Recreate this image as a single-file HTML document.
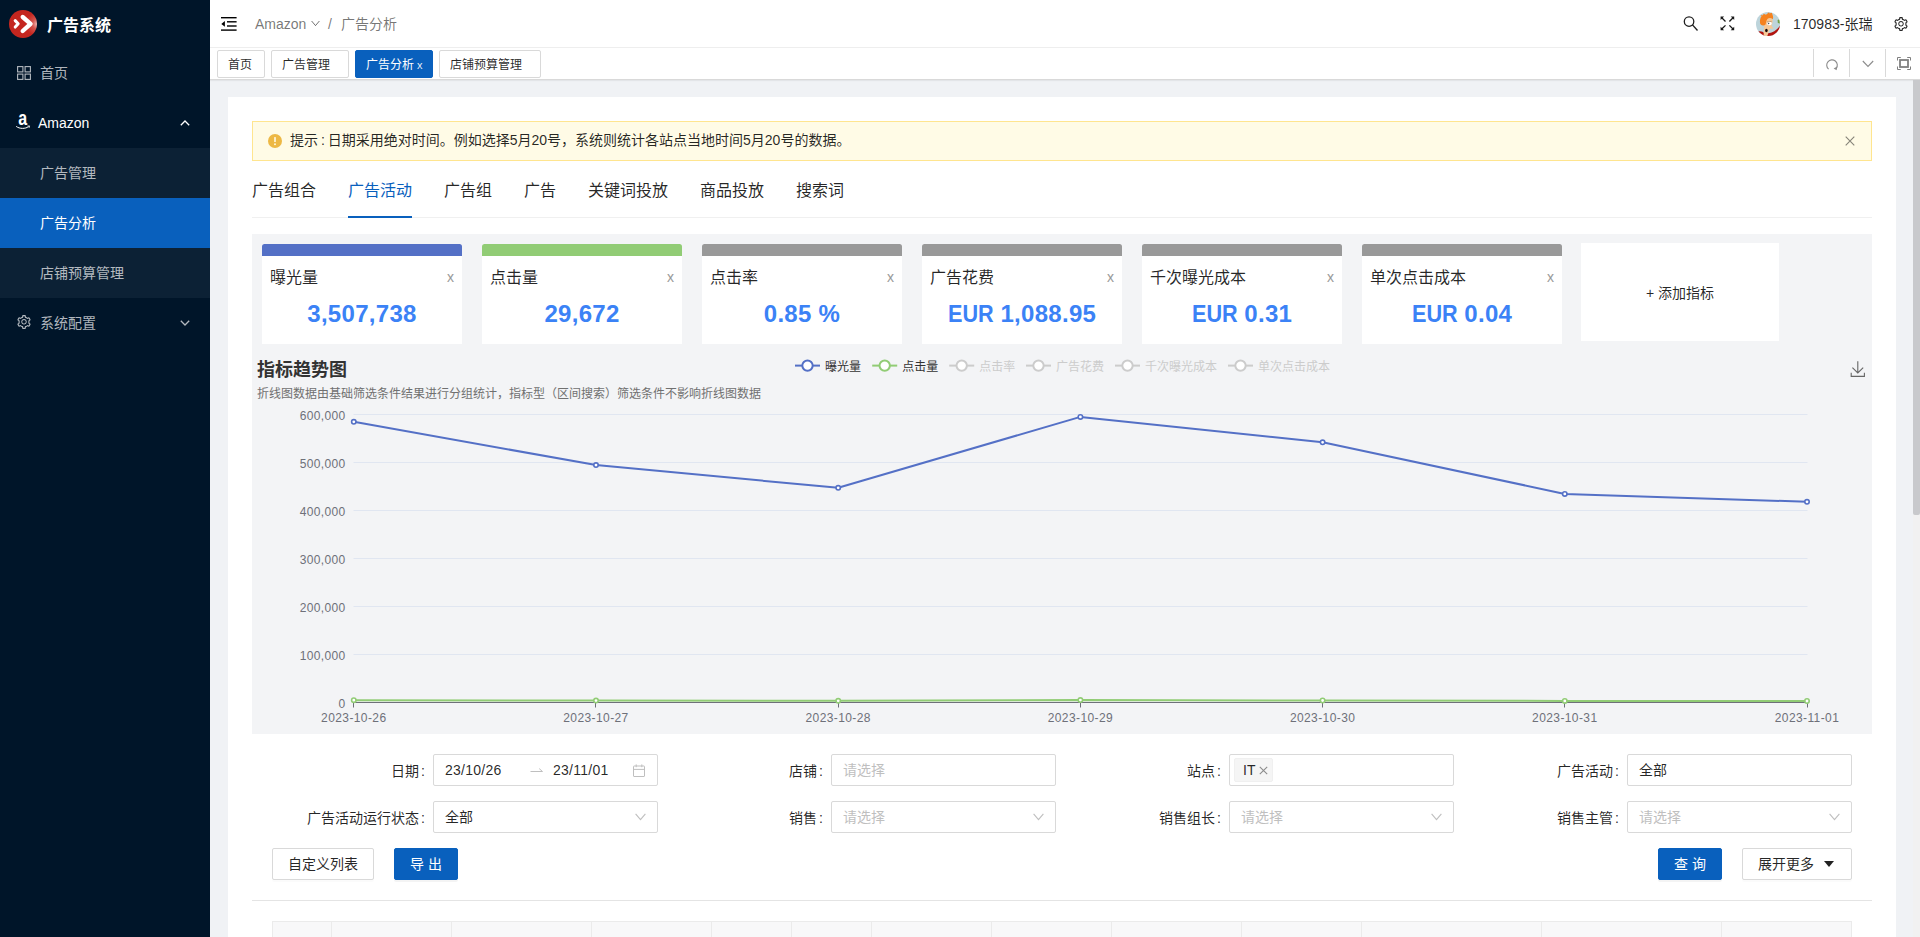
<!DOCTYPE html>
<html lang="zh-CN">
<head>
<meta charset="utf-8">
<title>广告系统</title>
<style>
*{box-sizing:border-box;margin:0;padding:0}
html,body{width:1920px;height:937px;overflow:hidden;background:#f0f2f5;
  font-family:"Liberation Sans","Noto Sans CJK SC",sans-serif;font-size:14px;color:rgba(0,0,0,.85)}
.abs{position:absolute}
/* ---------- sidebar ---------- */
#sider{position:absolute;left:0;top:0;width:210px;height:937px;background:#001529;color:#fff}
#logo{position:absolute;left:9px;top:10px;width:28px;height:28px}
#brand{position:absolute;left:47px;top:12px;font-size:16px;font-weight:700;line-height:28px;color:#fff;white-space:nowrap}
.mi{position:absolute;left:0;width:210px;height:50px;line-height:50px;font-size:14px;color:rgba(255,255,255,.7);white-space:nowrap}
.mi .t{position:absolute;left:40px;top:0}
.mi.sub{background:#0c2135}
.mi.act{background:#0960bd;color:#fff}
.mi svg{position:absolute}
/* ---------- header ---------- */
#header{position:absolute;left:210px;top:0;width:1710px;height:48px;background:#fff;border-bottom:1px solid #eee}
#tabs{position:absolute;left:210px;top:48px;width:1710px;height:32px;background:#fff;border-bottom:1px solid #d9d9d9;box-shadow:0 1px 1px rgba(0,0,0,.05)}
.tab{position:absolute;top:2px;height:28px;line-height:28px;border:1px solid #d9d9d9;border-radius:2px;font-size:12px;color:rgba(0,0,0,.85);background:#fff;text-align:left;padding-left:10px;white-space:nowrap}
.tab.on{background:#0960bd;border-color:#0960bd;color:#fff}
.tq{position:absolute;top:1px;height:28px;width:36px;border-left:1px solid #d9d9d9}
/* ---------- content ---------- */
#panel{position:absolute;left:228px;top:97px;width:1668px;height:860px;background:#fff}
#alert{position:absolute;left:252px;top:121px;width:1620px;height:40px;background:#fffbe6;border:1px solid #ffe58f;line-height:36px;font-size:14px;color:rgba(0,0,0,.85);white-space:nowrap}
.ptab{position:absolute;top:178px;font-size:16px;line-height:26px;color:rgba(0,0,0,.85);white-space:nowrap}
#gray{position:absolute;left:252px;top:234px;width:1620px;height:500px;background:#f3f4f6}
.card{position:absolute;top:244px;width:200px;height:100px;background:#fff;border-radius:2.5px 2.5px 0 0;overflow:hidden}
.card .bar{position:absolute;left:0;top:0;width:200px;height:12px}
.card .nm{position:absolute;left:8px;top:22px;font-size:16px;line-height:24px;color:rgba(0,0,0,.85);white-space:nowrap}
.card .x{position:absolute;right:8px;top:23px;font-size:14px;line-height:20px;color:#999}
.card .v{position:absolute;left:0;width:200px;top:54px;text-align:center;font-size:24px;line-height:32px;font-weight:700;color:#3b82f6;white-space:nowrap;letter-spacing:.3px}
.card .v .eu{display:inline-block;transform:scaleX(.9);transform-origin:100% 50%;margin-left:-5px;letter-spacing:0}
/* form */
.lbl{position:absolute;height:32px;line-height:32px;padding-top:1px;font-size:14px;color:rgba(0,0,0,.85);text-align:right;white-space:nowrap}
.inp{position:absolute;width:225px;height:32px;border:1px solid #d9d9d9;border-radius:2px;background:#fff;line-height:30px;font-size:14px;padding-left:11px;white-space:nowrap;color:rgba(0,0,0,.85)}
.inp.ph{color:#bfbfbf}
.btn{position:absolute;top:848px;height:32px;line-height:30px;border:1px solid #d9d9d9;border-radius:2px;background:#fff;font-size:14px;text-align:center;color:rgba(0,0,0,.85);white-space:nowrap;box-shadow:0 2px 0 rgba(0,0,0,.016)}
.btn.pri{background:#0960bd;border-color:#0960bd;color:#fff;box-shadow:0 2px 0 rgba(0,0,0,.045)}
</style>
</head>
<body>
<!-- SIDEBAR -->
<div id="sider">
  <svg id="logo" viewBox="0 0 28 28"><defs><radialGradient id="lg" cx="1.02" cy="0.5" r="0.42"><stop offset="0" stop-color="#f4c4bf"/><stop offset="0.45" stop-color="#d4534c"/><stop offset="1" stop-color="#c4261f"/></radialGradient></defs><circle cx="14" cy="14" r="14" fill="url(#lg)"/><path d="M6.2 10.6 L9.2 13.8 L6.2 17.1" fill="none" stroke="#fff" stroke-width="3" stroke-linecap="round" stroke-linejoin="round"/><path d="M13.7 7 L21.6 13.8 L13.7 21" fill="none" stroke="#fff" stroke-width="4.3" stroke-linecap="round" stroke-linejoin="round"/></svg>
  <div id="brand">广告系统</div>
  <div class="mi" style="top:48px"><svg style="left:17px;top:18px" width="14" height="14" viewBox="0 0 14 14" fill="none" stroke="rgba(255,255,255,.7)" stroke-width="1.1"><rect x=".6" y=".6" width="5.3" height="5.3"/><rect x="8.1" y=".6" width="5.3" height="5.3"/><rect x=".6" y="8.1" width="5.3" height="5.3"/><rect x="8.1" y="8.1" width="5.3" height="5.3"/></svg><span class="t">首页</span></div>
  <div class="mi" style="top:98px;color:#fff"><svg style="left:15px;top:16px" width="16" height="17" viewBox="0 0 16 17"><text x="4.2" y="10.6" font-family="'Liberation Sans',sans-serif" font-weight="700" font-size="20" fill="#fff" transform="scale(.8 1)">a</text><path d="M1.2 12.4 C4.5 15 10.5 15 13.6 12.6" fill="none" stroke="#fff" stroke-width="1"/><path d="M12.4 12.1 L14.6 11.9 L14 13.9" fill="none" stroke="#fff" stroke-width=".8"/></svg><span class="t" style="left:38px">Amazon</span><svg style="left:180px;top:22px" width="10" height="6" viewBox="0 0 10 6"><path d="M0.8 5.2 L5 1 L9.2 5.2" fill="none" stroke="#fff" stroke-width="1.3"/></svg></div>
  <div class="mi sub" style="top:148px"><span class="t">广告管理</span></div>
  <div class="mi sub act" style="top:198px"><span class="t">广告分析</span></div>
  <div class="mi sub" style="top:248px"><span class="t">店铺预算管理</span></div>
  <div class="mi" style="top:298px"><svg style="left:16px;top:16px" width="16" height="16" viewBox="0 0 1024 1024"><path fill="rgba(255,255,255,.7)" d="M924.8 625.7l-65.5-56c3.1-19 4.7-38.400 4.700-57.800s-1.600-38.800-4.700-57.800l65.5-56a32.030 32.030 0 0 0 9.300-35.200l-.9-2.600a442.270 442.270 0 0 0-79.700-137.900l-1.800-2.100a32.120 32.120 0 0 0-35.100-9.500l-81.300 28.900c-30-24.600-63.500-44-99.700-57.600l-15.700-85a32.050 32.050 0 0 0-25.800-25.700l-2.700-.5c-52.100-9.400-106.900-9.400-159 0l-2.700.5a32.050 32.050 0 0 0-25.800 25.700l-15.800 85.400a351.860 351.860 0 0 0-99 57.400l-81.900-29.100a32 32 0 0 0-35.100 9.500l-1.800 2.100a446.020 446.020 0 0 0-79.700 137.900l-.9 2.600c-4.500 12.500-.8 26.500 9.300 35.200l66.300 56.600c-3.100 18.800-4.600 38-4.600 57.100 0 19.200 1.500 38.400 4.600 57.100L99 625.500a32.030 32.030 0 0 0-9.300 35.200l.9 2.600c18.100 50.400 44.900 96.900 79.700 137.900l1.800 2.100a32.120 32.120 0 0 0 35.100 9.500l81.900-29.100c29.800 24.500 63.100 43.900 99 57.400l15.800 85.400a32.050 32.050 0 0 0 25.800 25.700l2.700.5a449.400 449.400 0 0 0 159 0l2.700-.5a32.050 32.050 0 0 0 25.800-25.700l15.700-85a350 350 0 0 0 99.700-57.600l81.300 28.900a32 32 0 0 0 35.100-9.500l1.800-2.100c34.800-41.100 61.600-87.500 79.700-137.900l.9-2.600c4.500-12.300.8-26.300-9.300-35zM788.300 465.900c2.500 15.100 3.800 30.600 3.800 46.100s-1.300 31-3.800 46.100l-6.600 40.100 74.700 63.900a370.030 370.030 0 0 1-42.600 73.600L721 702.800l-31.400 25.800c-23.900 19.600-50.500 35-79.300 45.800l-38.100 14.300-17.900 97a377.500 377.500 0 0 1-85 0l-17.900-97.200-37.800-14.500c-28.500-10.800-55-26.200-78.700-45.700l-31.400-25.900-93.400 33.200c-17-22.900-31.200-47.600-42.600-73.600l75.500-64.500-6.500-40c-2.400-14.900-3.700-30.300-3.700-45.500 0-15.300 1.200-30.600 3.700-45.500l6.500-40-75.500-64.500c11.300-26.100 25.600-50.700 42.600-73.600l93.400 33.200 31.400-25.900c23.700-19.500 50.200-34.900 78.700-45.700l37.900-14.300 17.900-97.200c28.100-3.200 56.800-3.200 85 0l17.900 97 38.100 14.300c28.700 10.800 55.400 26.200 79.300 45.800l31.400 25.800 92.800-32.900c17 22.900 31.200 47.600 42.600 73.600L781.800 426l6.500 39.900zM512 326c-97.200 0-176 78.800-176 176s78.800 176 176 176 176-78.800 176-176-78.800-176-176-176zm79.200 255.200A111.600 111.600 0 0 1 512 614c-29.900 0-58-11.700-79.200-32.800A111.600 111.600 0 0 1 400 502c0-29.900 11.700-58 32.800-79.200C454 401.600 482.100 390 512 390c29.900 0 58 11.600 79.200 32.800A111.600 111.600 0 0 1 624 502c0 29.900-11.700 58-32.800 79.200z"/></svg><span class="t">系统配置</span><svg style="left:180px;top:22px" width="10" height="6" viewBox="0 0 10 6"><path d="M0.8 0.8 L5 5 L9.2 0.8" fill="none" stroke="rgba(255,255,255,.7)" stroke-width="1.3"/></svg></div>
</div>
<!-- HEADER -->
<div id="header">
  <svg class="abs" style="left:11px;top:17px" width="16" height="14" viewBox="0 0 16 14"><g fill="#000"><rect x="0" y="0" width="15.6" height="1.4"/><rect x="6" y="4.1" width="9.6" height="1.4"/><rect x="6" y="8.3" width="9.6" height="1.4"/><rect x="0" y="12.4" width="15.6" height="1.4"/><path d="M0.3 6.9 L3.9 4.1 V9.7 Z"/></g></svg>
  <div class="abs" style="left:45px;top:13px;font-size:14px;line-height:22px;color:rgba(0,0,0,.55);white-space:nowrap">Amazon</div>
  <svg class="abs" style="left:101px;top:20px" width="9" height="7" viewBox="0 0 9 7"><path d="M0.6 1 L4.5 5.6 L8.4 1" fill="none" stroke="rgba(0,0,0,.55)" stroke-width="1"/></svg>
  <div class="abs" style="left:118px;top:13px;font-size:14px;line-height:22px;color:rgba(0,0,0,.55)">/</div>
  <div class="abs" style="left:131px;top:13px;font-size:14px;line-height:22px;color:rgba(0,0,0,.55);white-space:nowrap">广告分析</div>
  <!-- right actions -->
  <svg class="abs" style="left:1473px;top:16px" width="16" height="16" viewBox="0 0 16 16"><circle cx="6.05" cy="5.55" r="4.75" fill="none" stroke="#000" stroke-opacity=".88" stroke-width="1.3"/><path d="M9.5 8.9 L14.5 14.5" stroke="#000" stroke-opacity=".88" stroke-width="1.4"/></svg>
  <svg class="abs" style="left:1510px;top:16px" width="15" height="15" viewBox="0 0 15 15"><g stroke="#000" stroke-opacity=".9" stroke-width="1.3" fill="none"><path d="M2 2 L5.5 5.5 M12.8 2 L9.4 5.5 M2 12.8 L5.5 9.4 M12.8 12.8 L9.4 9.4"/></g><g fill="#000" fill-opacity=".9"><path d="M0.6 0.6 H4.1 L0.6 4.1 Z M14.2 0.6 V4.1 L10.7 0.6 Z M0.6 14.2 V10.7 L4.1 14.2 Z M14.2 14.2 H10.7 L14.2 10.7 Z"/></g></svg>
  <svg class="abs" style="left:1546px;top:12px" width="24" height="24" viewBox="0 0 24 24"><defs><clipPath id="av"><circle cx="12" cy="12" r="12"/></clipPath></defs><g clip-path="url(#av)"><rect width="24" height="24" fill="#bdd4db"/><path d="M21.6 8 L24 7 V11.4 L21.8 11 Z" fill="#6fa044"/><path d="M1 20 C4 18.6 7 19.6 8.4 21.4 V24 H1 Z" fill="#b3140f"/><path d="M10.8 24 L11.6 21.4 C16 21.2 21 18.4 24 13.6 V24 Z" fill="#b3140f"/><path d="M8.6 10 C9 7 11 5.4 13.6 5.6 C15.6 5.8 16.9 7.5 16.6 9.5 L16.1 12 L15.4 13.2 L17.5 16.7 L14.7 16.4 L13.2 18 L12.2 21 L11.4 24 H7.6 L8 15 Z" fill="#f7c896"/><path d="M4 11 C3.6 8 4.6 5.2 5.6 4.2 L4.4 3.2 L7 3.3 L7.6 1.8 L10 2.8 L13 0.2 L13.7 1.6 L15.7 0.6 L16.7 3.2 C17.3 4.8 17.2 6.2 16.8 7.2 C15.4 6 13.4 5.6 12 6.6 C10.6 7.8 10.1 9.6 9.9 11.2 C9.6 12.8 8.6 13.6 7 13.4 C5.5 13.2 4.3 12.4 4 11 Z" fill="#f5821f"/><ellipse cx="13.4" cy="11.4" rx="2.3" ry="1.9" fill="#fff"/><circle cx="12.6" cy="11.5" r=".8" fill="#4a5a66"/><path d="M10.8 10 L15.6 9.4" stroke="#8a6a4a" stroke-width=".5"/><ellipse cx="10.4" cy="18.5" rx="1.3" ry="1.7" fill="#140808"/></g></svg>
  <div class="abs" style="left:1583px;top:13px;font-size:14px;line-height:22px;color:rgba(0,0,0,.85);white-space:nowrap">170983-张瑞</div>
  <svg class="abs" style="left:1683px;top:16px" width="16" height="16" viewBox="0 0 1024 1024"><path fill="rgba(0,0,0,.85)" d="M924.8 625.7l-65.5-56c3.1-19 4.7-38.400 4.700-57.800s-1.600-38.800-4.700-57.800l65.5-56a32.030 32.030 0 0 0 9.300-35.200l-.9-2.600a442.270 442.270 0 0 0-79.700-137.900l-1.800-2.100a32.120 32.120 0 0 0-35.100-9.500l-81.300 28.900c-30-24.600-63.500-44-99.700-57.600l-15.700-85a32.050 32.050 0 0 0-25.800-25.700l-2.700-.5c-52.100-9.400-106.900-9.400-159 0l-2.700.5a32.050 32.050 0 0 0-25.800 25.700l-15.800 85.400a351.860 351.860 0 0 0-99 57.400l-81.900-29.100a32 32 0 0 0-35.100 9.500l-1.800 2.100a446.020 446.020 0 0 0-79.700 137.900l-.9 2.600c-4.500 12.500-.8 26.500 9.300 35.200l66.300 56.600c-3.100 18.800-4.600 38-4.600 57.100 0 19.200 1.500 38.400 4.600 57.100L99 625.500a32.030 32.030 0 0 0-9.300 35.200l.9 2.600c18.100 50.400 44.900 96.900 79.700 137.900l1.800 2.100a32.120 32.120 0 0 0 35.100 9.500l81.900-29.100c29.800 24.500 63.100 43.900 99 57.400l15.800 85.400a32.050 32.050 0 0 0 25.800 25.700l2.700.5a449.400 449.400 0 0 0 159 0l2.700-.5a32.050 32.050 0 0 0 25.800-25.700l15.700-85a350 350 0 0 0 99.700-57.600l81.300 28.900a32 32 0 0 0 35.100-9.500l1.800-2.100c34.800-41.100 61.600-87.500 79.700-137.900l.9-2.600c4.500-12.300.8-26.300-9.300-35zM788.300 465.900c2.500 15.100 3.800 30.600 3.800 46.100s-1.300 31-3.800 46.100l-6.600 40.100 74.700 63.900a370.030 370.030 0 0 1-42.600 73.600L721 702.800l-31.400 25.800c-23.900 19.600-50.500 35-79.300 45.800l-38.100 14.300-17.900 97a377.500 377.500 0 0 1-85 0l-17.900-97.200-37.800-14.500c-28.500-10.800-55-26.200-78.700-45.700l-31.400-25.900-93.400 33.200c-17-22.900-31.200-47.600-42.600-73.600l75.500-64.500-6.500-40c-2.400-14.900-3.700-30.300-3.700-45.500 0-15.300 1.200-30.600 3.700-45.500l6.500-40-75.500-64.500c11.300-26.100 25.600-50.700 42.600-73.600l93.400 33.200 31.400-25.900c23.700-19.500 50.200-34.900 78.700-45.700l37.900-14.300 17.900-97.200c28.100-3.200 56.800-3.200 85 0l17.900 97 38.100 14.300c28.700 10.800 55.400 26.200 79.300 45.800l31.400 25.800 92.800-32.900c17 22.900 31.200 47.600 42.600 73.600L781.800 426l6.500 39.900zM512 326c-97.200 0-176 78.800-176 176s78.800 176 176 176 176-78.800 176-176-78.800-176-176-176zm79.200 255.200A111.600 111.600 0 0 1 512 614c-29.900 0-58-11.700-79.200-32.800A111.600 111.600 0 0 1 400 502c0-29.900 11.700-58 32.800-79.200C454 401.600 482.100 390 512 390c29.900 0 58 11.600 79.200 32.800A111.600 111.600 0 0 1 624 502c0 29.900-11.700 58-32.800 79.200z"/></svg>
</div>
<div id="tabs">
  <div class="tab" style="left:7px;width:48px">首页</div>
  <div class="tab" style="left:61px;width:78px">广告管理</div>
  <div class="tab on" style="left:145px;width:78px">广告分析<span style="font-size:11px;margin-left:3px;color:rgba(255,255,255,.9)">x</span></div>
  <div class="tab" style="left:229px;width:102px">店铺预算管理</div>
  <div class="tq" style="left:1603px"><svg class="abs" style="left:11px;top:9px" width="14" height="14" viewBox="0 0 14 14"><path d="M3.6 11.2 A5.3 5.3 0 1 1 11.2 10.4" fill="none" stroke="#8c8c8c" stroke-width="1.1"/><path d="M12.3 8.6 L11.6 12.3 L8.6 10.6 Z" fill="#8c8c8c"/></svg></div>
  <div class="tq" style="left:1639px"><svg class="abs" style="left:12px;top:11px" width="12" height="8" viewBox="0 0 12 8"><path d="M0.8 1 L6 6.4 L11.2 1" fill="none" stroke="#8c8c8c" stroke-width="1.1"/></svg></div>
  <div class="tq" style="left:1675px"><svg class="abs" style="left:11px;top:8px" width="14" height="13" viewBox="0 0 14 13" fill="none" stroke="#808080"><rect x="3" y="3" width="8" height="7" stroke-width="1.8"/><path d="M0.5 3.5 V0.5 H3.8 M10.2 0.5 H13.5 V3.5 M13.5 9.5 V12.5 H10.2 M3.8 12.5 H0.5 V9.5" stroke-width="1"/></svg></div>
</div>
<!-- CONTENT -->
<div id="panel"></div>
<div id="alert">
  <svg class="abs" style="left:15px;top:12px" width="14" height="14" viewBox="0 0 14 14"><circle cx="7" cy="7" r="7" fill="#edb845"/><rect x="6.2" y="3" width="1.6" height="5" rx=".6" fill="#fffbe6"/><circle cx="7" cy="10.2" r=".95" fill="#fffbe6"/></svg>
  <span class="abs" style="left:37px;top:0"><span style="word-spacing:-1px">提示 : </span>日期采用绝对时间。例如选择5月20号，系统则统计各站点当地时间5月20号的数据。</span>
  <svg class="abs" style="left:1592px;top:14px" width="10" height="10" viewBox="0 0 10 10"><path d="M0.7 0.7 L9.3 9.3 M9.3 0.7 L0.7 9.3" stroke="rgba(0,0,0,.48)" stroke-width="1.1" fill="none"/></svg>
</div>
<div class="ptab" style="left:252px">广告组合</div>
<div class="ptab" style="left:348px;color:#0960bd">广告活动</div>
<div class="ptab" style="left:444px">广告组</div>
<div class="ptab" style="left:524px">广告</div>
<div class="ptab" style="left:588px">关键词投放</div>
<div class="ptab" style="left:700px">商品投放</div>
<div class="ptab" style="left:796px">搜索词</div>
<div class="abs" style="left:252px;top:217px;width:1620px;height:1px;background:#f0f0f0"></div>
<div class="abs" style="left:348px;top:216px;width:64px;height:2px;background:#0960bd"></div>
<div id="gray"></div>
<div class="card" style="left:262px"><div class="bar" style="background:#5470c6"></div><div class="nm">曝光量</div><div class="x">x</div><div class="v">3,507,738</div></div>
<div class="card" style="left:482px"><div class="bar" style="background:#91cc75"></div><div class="nm">点击量</div><div class="x">x</div><div class="v">29,672</div></div>
<div class="card" style="left:702px"><div class="bar" style="background:#999"></div><div class="nm">点击率</div><div class="x">x</div><div class="v">0.85 %</div></div>
<div class="card" style="left:922px"><div class="bar" style="background:#999"></div><div class="nm">广告花费</div><div class="x">x</div><div class="v"><span class="eu">EUR</span> 1,088.95</div></div>
<div class="card" style="left:1142px"><div class="bar" style="background:#999"></div><div class="nm">千次曝光成本</div><div class="x">x</div><div class="v"><span class="eu">EUR</span> 0.31</div></div>
<div class="card" style="left:1362px"><div class="bar" style="background:#999"></div><div class="nm">单次点击成本</div><div class="x">x</div><div class="v"><span class="eu">EUR</span> 0.04</div></div>
<div class="abs" style="left:1581px;top:243px;width:198px;height:98px;background:#fff;line-height:101px;text-align:center;font-size:14px;color:rgba(0,0,0,.85);white-space:nowrap">+ 添加指标</div>
<div class="abs" style="left:257px;top:357px;font-size:18px;font-weight:700;line-height:26px;color:#333;white-space:nowrap">指标趋势图</div>
<div class="abs" style="left:257px;top:385px;font-size:12px;line-height:18px;color:#707070;white-space:nowrap">折线图数据由基础筛选条件结果进行分组统计，指标型（区间搜索）筛选条件不影响折线图数据</div>
<svg class="abs" style="left:0;top:0" width="1920" height="937" viewBox="0 0 1920 937" font-family="'Liberation Sans','Noto Sans CJK SC',sans-serif" font-size="12">
<path d="M353.5 414.5 H1807.5" stroke="#e0e6f1" stroke-width="1"/>
<path d="M353.5 462.5 H1807.5" stroke="#e0e6f1" stroke-width="1"/>
<path d="M353.5 510.5 H1807.5" stroke="#e0e6f1" stroke-width="1"/>
<path d="M353.5 558.5 H1807.5" stroke="#e0e6f1" stroke-width="1"/>
<path d="M353.5 606.5 H1807.5" stroke="#e0e6f1" stroke-width="1"/>
<path d="M353.5 654.5 H1807.5" stroke="#e0e6f1" stroke-width="1"/>
<path d="M353.5 702.5 H1807.5" stroke="#6e7079" stroke-width="1"/>
<path d="M353.5 702.5 V707.5" stroke="#6e7079" stroke-width="1"/>
<path d="M595.5 702.5 V707.5" stroke="#6e7079" stroke-width="1"/>
<path d="M838.5 702.5 V707.5" stroke="#6e7079" stroke-width="1"/>
<path d="M1080.5 702.5 V707.5" stroke="#6e7079" stroke-width="1"/>
<path d="M1322.5 702.5 V707.5" stroke="#6e7079" stroke-width="1"/>
<path d="M1564.5 702.5 V707.5" stroke="#6e7079" stroke-width="1"/>
<path d="M1807.5 702.5 V707.5" stroke="#6e7079" stroke-width="1"/>
<text x="345.5" y="419.6" text-anchor="end" fill="#6e7079" letter-spacing=".35">600,000</text>
<text x="345.5" y="467.6" text-anchor="end" fill="#6e7079" letter-spacing=".35">500,000</text>
<text x="345.5" y="515.6" text-anchor="end" fill="#6e7079" letter-spacing=".35">400,000</text>
<text x="345.5" y="563.6" text-anchor="end" fill="#6e7079" letter-spacing=".35">300,000</text>
<text x="345.5" y="611.6" text-anchor="end" fill="#6e7079" letter-spacing=".35">200,000</text>
<text x="345.5" y="659.6" text-anchor="end" fill="#6e7079" letter-spacing=".35">100,000</text>
<text x="345.5" y="707.6" text-anchor="end" fill="#6e7079" letter-spacing=".35">0</text>
<text x="353.8" y="722.2" text-anchor="middle" fill="#6e7079" letter-spacing=".4">2023-10-26</text>
<text x="596.0" y="722.2" text-anchor="middle" fill="#6e7079" letter-spacing=".4">2023-10-27</text>
<text x="838.2" y="722.2" text-anchor="middle" fill="#6e7079" letter-spacing=".4">2023-10-28</text>
<text x="1080.4" y="722.2" text-anchor="middle" fill="#6e7079" letter-spacing=".4">2023-10-29</text>
<text x="1322.6" y="722.2" text-anchor="middle" fill="#6e7079" letter-spacing=".4">2023-10-30</text>
<text x="1564.8" y="722.2" text-anchor="middle" fill="#6e7079" letter-spacing=".4">2023-10-31</text>
<text x="1807.0" y="722.2" text-anchor="middle" fill="#6e7079" letter-spacing=".4">2023-11-01</text>
<path d="M353.8 421.8 L596.0 465.1 L838.2 487.8 L1080.4 416.9 L1322.6 442.3 L1564.8 493.9 L1807.0 501.8" fill="none" stroke="#5470c6" stroke-width="2" stroke-linejoin="bevel"/>
<circle cx="353.8" cy="421.8" r="2.2" fill="#fff" stroke="#5470c6" stroke-width="1.6"/>
<circle cx="596.0" cy="465.1" r="2.2" fill="#fff" stroke="#5470c6" stroke-width="1.6"/>
<circle cx="838.2" cy="487.8" r="2.2" fill="#fff" stroke="#5470c6" stroke-width="1.6"/>
<circle cx="1080.4" cy="416.9" r="2.2" fill="#fff" stroke="#5470c6" stroke-width="1.6"/>
<circle cx="1322.6" cy="442.3" r="2.2" fill="#fff" stroke="#5470c6" stroke-width="1.6"/>
<circle cx="1564.8" cy="493.9" r="2.2" fill="#fff" stroke="#5470c6" stroke-width="1.6"/>
<circle cx="1807.0" cy="501.8" r="2.2" fill="#fff" stroke="#5470c6" stroke-width="1.6"/>
<path d="M353.8 700.2 L596.0 700.6 L838.2 700.8 L1080.4 700.1 L1322.6 700.5 L1564.8 700.9 L1807.0 701.0" fill="none" stroke="#91cc75" stroke-width="2" stroke-linejoin="bevel"/>
<circle cx="353.8" cy="700.2" r="2.2" fill="#fff" stroke="#91cc75" stroke-width="1.6"/>
<circle cx="596.0" cy="700.6" r="2.2" fill="#fff" stroke="#91cc75" stroke-width="1.6"/>
<circle cx="838.2" cy="700.8" r="2.2" fill="#fff" stroke="#91cc75" stroke-width="1.6"/>
<circle cx="1080.4" cy="700.1" r="2.2" fill="#fff" stroke="#91cc75" stroke-width="1.6"/>
<circle cx="1322.6" cy="700.5" r="2.2" fill="#fff" stroke="#91cc75" stroke-width="1.6"/>
<circle cx="1564.8" cy="700.9" r="2.2" fill="#fff" stroke="#91cc75" stroke-width="1.6"/>
<circle cx="1807.0" cy="701.0" r="2.2" fill="#fff" stroke="#91cc75" stroke-width="1.6"/>
<path d="M795 365.6 H820" stroke="#5470c6" stroke-width="2"/><circle cx="807.5" cy="365.6" r="5.2" fill="#fff" stroke="#5470c6" stroke-width="2"/><text x="825" y="371" fill="#333">曝光量</text>
<path d="M872.2 365.6 H897.2" stroke="#91cc75" stroke-width="2"/><circle cx="884.7" cy="365.6" r="5.2" fill="#fff" stroke="#91cc75" stroke-width="2"/><text x="902.2" y="371" fill="#333">点击量</text>
<path d="M949.2 365.6 H974.2" stroke="#ccc" stroke-width="2"/><circle cx="961.7" cy="365.6" r="5.2" fill="#fff" stroke="#ccc" stroke-width="2"/><text x="979.2" y="371" fill="#ccc">点击率</text>
<path d="M1026 365.6 H1051" stroke="#ccc" stroke-width="2"/><circle cx="1038.5" cy="365.6" r="5.2" fill="#fff" stroke="#ccc" stroke-width="2"/><text x="1056" y="371" fill="#ccc">广告花费</text>
<path d="M1115 365.6 H1140" stroke="#ccc" stroke-width="2"/><circle cx="1127.5" cy="365.6" r="5.2" fill="#fff" stroke="#ccc" stroke-width="2"/><text x="1145" y="371" fill="#ccc">千次曝光成本</text>
<path d="M1228 365.6 H1253" stroke="#ccc" stroke-width="2"/><circle cx="1240.5" cy="365.6" r="5.2" fill="#fff" stroke="#ccc" stroke-width="2"/><text x="1258" y="371" fill="#ccc">单次点击成本</text>
<path d="M1857.8 361.3 V372.6 M1852.4 367.6 L1857.8 373 L1863.2 367.6 M1851.2 372.8 V376.4 H1864.4 V372.8" fill="none" stroke="#666" stroke-width="1.1"/>
</svg>
<div class="lbl" style="left:225px;top:754px;width:200px">日期<span style="margin-left:2px">:</span></div>
<div class="inp" style="left:433px;top:754px"><span style="letter-spacing:.25px">23/10/26</span><svg class="abs" style="left:96px;top:11px" width="14" height="9" viewBox="0 0 14 9"><path d="M0.5 5.5 H12.5 L9.2 2.6" fill="none" stroke="#bfbfbf" stroke-width="1"/></svg><span class="abs" style="left:119px;top:0;letter-spacing:.25px">23/11/01</span><svg class="abs" style="left:199px;top:9px" width="12" height="13" viewBox="0 0 12 13" fill="none" stroke="#bfbfbf" stroke-width="1"><rect x=".5" y="2" width="11" height="10.5" rx=".5"/><path d="M.5 5.4 H11.5 M3.2 .4 V3.2 M8.8 .4 V3.2"/></svg></div>
<div class="lbl" style="left:623px;top:754px;width:200px">店铺<span style="margin-left:2px">:</span></div>
<div class="inp ph" style="left:831px;top:754px">请选择</div>
<div class="lbl" style="left:1021px;top:754px;width:200px">站点<span style="margin-left:2px">:</span></div>
<div class="inp" style="left:1229px;top:754px"><div class="abs" style="left:4px;top:3px;width:39px;height:24px;background:#f5f5f5;border:1px solid #f0f0f0;border-radius:2px;line-height:22px;padding-left:8px">IT<svg class="abs" style="left:24px;top:7px" width="9" height="9" viewBox="0 0 9 9"><path d="M0.8 0.8 L8.2 8.2 M8.2 0.8 L0.8 8.2" stroke="#8c8c8c" stroke-width="1.1"/></svg></div></div>
<div class="lbl" style="left:1419px;top:754px;width:200px">广告活动<span style="margin-left:2px">:</span></div>
<div class="inp" style="left:1627px;top:754px">全部</div>
<div class="lbl" style="left:225px;top:801px;width:200px">广告活动运行状态<span style="margin-left:2px">:</span></div>
<div class="inp" style="left:433px;top:801px">全部<svg class="abs" style="right:11px;top:11px" width="11" height="8" viewBox="0 0 11 8"><path d="M0.6 0.8 L5.5 6.6 L10.4 0.8" fill="none" stroke="#bfbfbf" stroke-width="1.1"/></svg></div>
<div class="lbl" style="left:623px;top:801px;width:200px">销售<span style="margin-left:2px">:</span></div>
<div class="inp ph" style="left:831px;top:801px">请选择<svg class="abs" style="right:11px;top:11px" width="11" height="8" viewBox="0 0 11 8"><path d="M0.6 0.8 L5.5 6.6 L10.4 0.8" fill="none" stroke="#bfbfbf" stroke-width="1.1"/></svg></div>
<div class="lbl" style="left:1021px;top:801px;width:200px">销售组长<span style="margin-left:2px">:</span></div>
<div class="inp ph" style="left:1229px;top:801px">请选择<svg class="abs" style="right:11px;top:11px" width="11" height="8" viewBox="0 0 11 8"><path d="M0.6 0.8 L5.5 6.6 L10.4 0.8" fill="none" stroke="#bfbfbf" stroke-width="1.1"/></svg></div>
<div class="lbl" style="left:1419px;top:801px;width:200px">销售主管<span style="margin-left:2px">:</span></div>
<div class="inp ph" style="left:1627px;top:801px">请选择<svg class="abs" style="right:11px;top:11px" width="11" height="8" viewBox="0 0 11 8"><path d="M0.6 0.8 L5.5 6.6 L10.4 0.8" fill="none" stroke="#bfbfbf" stroke-width="1.1"/></svg></div>
<div class="btn" style="left:272px;width:102px">自定义列表</div>
<div class="btn pri" style="left:394px;width:64px">导 出</div>
<div class="btn pri" style="left:1658px;width:64px">查 询</div>
<div class="btn" style="left:1742px;width:110px;text-align:left;padding-left:15px">展开更多<svg class="abs" style="left:81px;top:12px" width="10" height="6" viewBox="0 0 10 6"><path d="M0 0 H10 L5 6 Z" fill="#222"/></svg></div>
<div class="abs" style="left:252px;top:900px;width:1620px;height:1px;background:#e4e4e4"></div>
<div class="abs" style="left:272px;top:921px;width:1580px;height:20px;background:#f8f8f9;border-top:1px solid #ebebeb;border-left:1px solid #ebebeb;border-right:1px solid #ebebeb"></div>
<div class="abs" style="left:331px;top:921px;width:1px;height:20px;background:#ebebeb"></div>
<div class="abs" style="left:451px;top:921px;width:1px;height:20px;background:#ebebeb"></div>
<div class="abs" style="left:591px;top:921px;width:1px;height:20px;background:#ebebeb"></div>
<div class="abs" style="left:711px;top:921px;width:1px;height:20px;background:#ebebeb"></div>
<div class="abs" style="left:791px;top:921px;width:1px;height:20px;background:#ebebeb"></div>
<div class="abs" style="left:871px;top:921px;width:1px;height:20px;background:#ebebeb"></div>
<div class="abs" style="left:991px;top:921px;width:1px;height:20px;background:#ebebeb"></div>
<div class="abs" style="left:1111px;top:921px;width:1px;height:20px;background:#ebebeb"></div>
<div class="abs" style="left:1241px;top:921px;width:1px;height:20px;background:#ebebeb"></div>
<div class="abs" style="left:1361px;top:921px;width:1px;height:20px;background:#ebebeb"></div>
<div class="abs" style="left:1541px;top:921px;width:1px;height:20px;background:#ebebeb"></div>
<div class="abs" style="left:1721px;top:921px;width:1px;height:20px;background:#ebebeb"></div>
<div class="abs" style="left:1913px;top:80px;width:7px;height:857px;background:#f1f1f1"></div>
<div class="abs" style="left:1913px;top:80px;width:7px;height:435px;background:#c8c9cc;border-radius:0 0 2px 2px"></div>
</body>
</html>
